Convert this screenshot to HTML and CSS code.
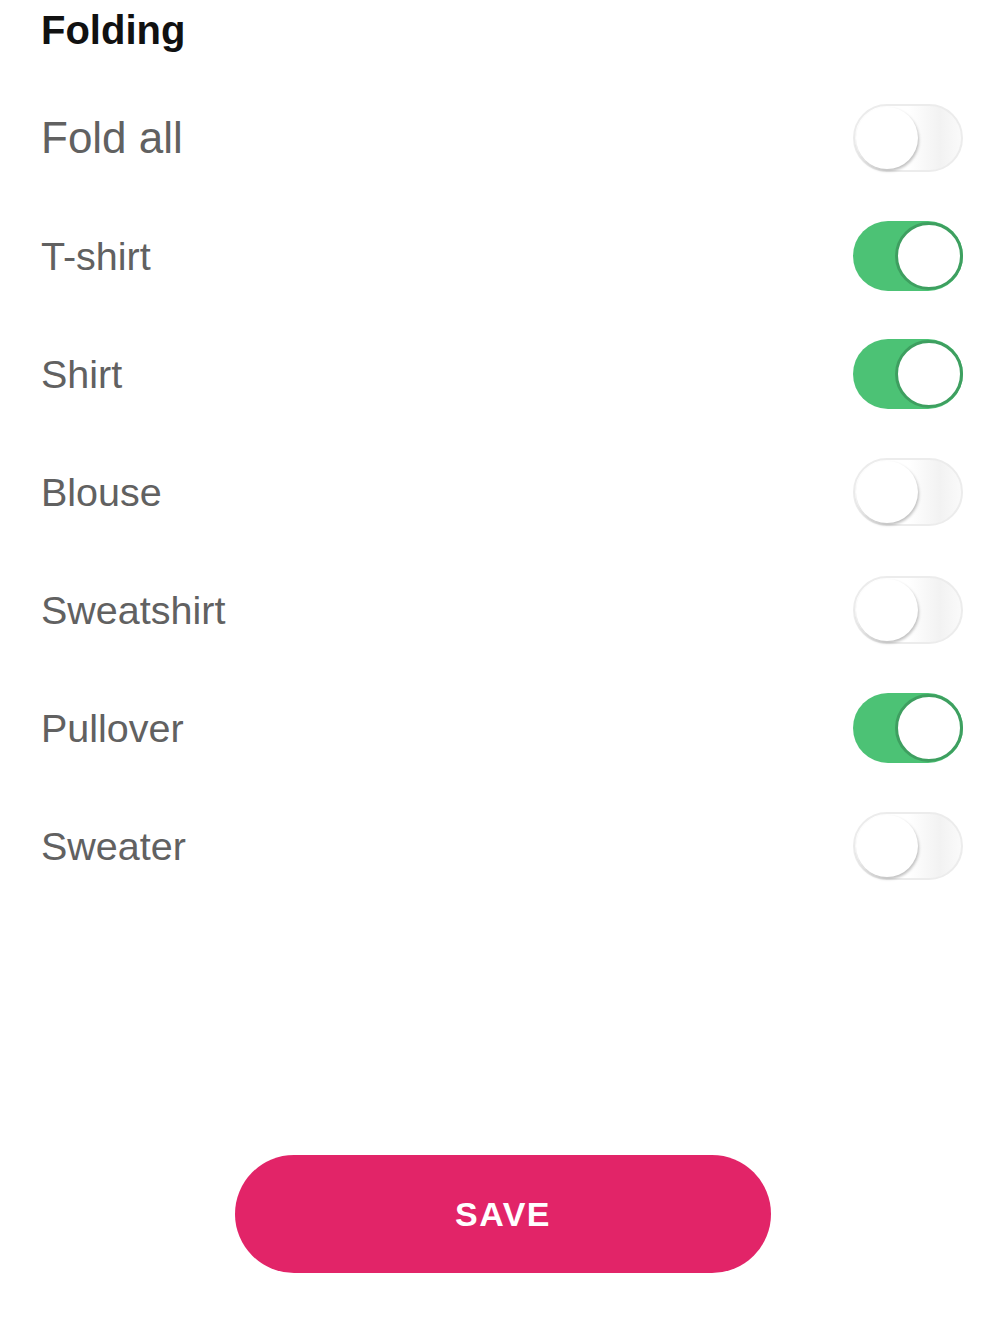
FILE: index.html
```html
<!DOCTYPE html>
<html>
    <head lang="en">
        <meta charset="UTF-8">
        <title>Folding</title>
        <link rel="stylesheet" href="styles.css">
    </head>
    <body>
        <div id="page">
            <h1 class="title">Folding</h1>
            <ul id="list">
                <li class="row big"><span>Fold all</span><span class="switch"><i></i></span></li>
                <li class="row"><span>T-shirt</span><span class="switch on"><i></i></span></li>
                <li class="row"><span>Shirt</span><span class="switch on"><i></i></span></li>
                <li class="row"><span>Blouse</span><span class="switch"><i></i></span></li>
                <li class="row"><span>Sweatshirt</span><span class="switch"><i></i></span></li>
                <li class="row"><span>Pullover</span><span class="switch on"><i></i></span></li>
                <li class="row"><span>Sweater</span><span class="switch"><i></i></span></li>
            </ul>
            <div class="bottom">
                <button class="save">SAVE</button>
            </div>
        </div>
    </body>
</html>
```

FILE: styles.css
```css
*{
    margin:0;
    padding:0;
}
ul,ol{
    list-style:none;
}
body{
    background:#fff;
    font-family:"Liberation Sans", Arial, sans-serif;
}
#page{
    padding:0 37px 0 41px;
}
.title{
    font-size:40px;
    font-weight:bold;
    color:#111;
    line-height:60px;
    margin-bottom:19px;
}
.row{
    height:118px;
    display:flex;
    align-items:center;
    justify-content:space-between;
    font-size:39.5px;
    color:#616161;
}
.row.big{
    font-size:44px;
}
.switch{
    width:110px;
    height:68px;
    box-sizing:border-box;
    border:2px solid #ececec;
    border-radius:34px;
    background:linear-gradient(to right,#fff 50%,#f2f2f2 80%,#fafafa);
    display:flex;
    align-items:center;
    padding:0 1px;
}
.switch i{
    width:62px;
    height:62px;
    border-radius:50%;
    background:#fff;
    box-shadow:1px 2px 3px rgba(0,0,0,0.25);
}
.switch.on{
    height:70px;
    border:none;
    border-radius:35px;
    background:#4cc275;
    justify-content:flex-end;
    padding:0;
}
.switch.on i{
    width:62px;
    height:62px;
    border:3px solid #3e9f60;
    box-shadow:none;
}
.bottom{
    display:flex;
    justify-content:center;
    padding:250px 0 0 2px;
}
.save{
    width:536px;
    height:118px;
    border:none;
    border-radius:59px;
    background:#e22468;
    color:#fff;
    font-family:"Liberation Sans", Arial, sans-serif;
    font-size:34px;
    font-weight:bold;
    letter-spacing:1.5px;
}
```
